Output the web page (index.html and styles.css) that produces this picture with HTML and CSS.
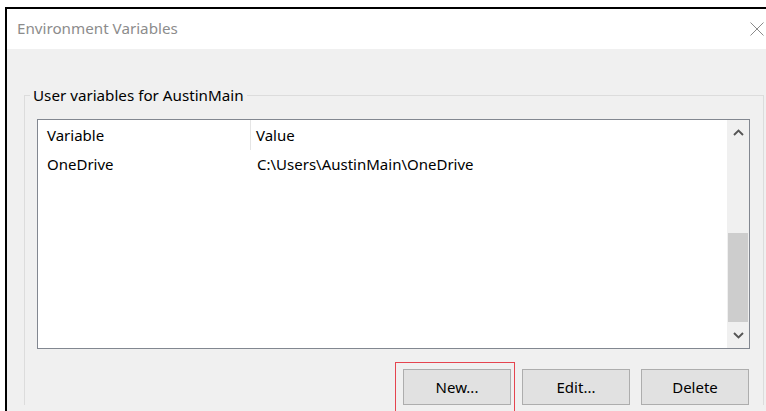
FILE: index.html
```html
<!DOCTYPE html>
<html lang="en">
<head>
<meta charset="utf-8">
<title>Environment Variables</title>
<link rel="stylesheet" href="styles.css">
</head>
<body>
<div class="window">
  <div class="titlebar">
    <span class="title">Environment Variables</span>
    <svg class="close" width="14" height="14" viewBox="0 0 14 14" aria-hidden="true">
      <path d="M0.5 0.5 L13.5 13.5 M13.5 0.5 L0.5 13.5" stroke="#8a8a8a" stroke-width="1" fill="none"/>
    </svg>
  </div>
  <div class="content">
    <fieldset class="group">
      <legend>User variables for AustinMain</legend>
      <div class="listbox">
        <div class="table">
          <div class="row header">
            <div class="cell col-name">Variable</div>
            <div class="cell col-value">Value</div>
          </div>
          <div class="row">
            <div class="cell col-name">OneDrive</div>
            <div class="cell col-value">C:\Users\AustinMain\OneDrive</div>
          </div>
        </div>
        <div class="scrollbar">
          <div class="arrow">
            <svg width="11" height="7" viewBox="0 0 11 7"><path d="M1 6 L5.5 1.5 L10 6" stroke="#555" stroke-width="1.9" fill="none"/></svg>
          </div>
          <div class="track"><div class="thumb"></div></div>
          <div class="arrow">
            <svg width="11" height="7" viewBox="0 0 11 7"><path d="M1 1 L5.5 5.5 L10 1" stroke="#555" stroke-width="1.9" fill="none"/></svg>
          </div>
        </div>
      </div>
      <div class="buttons">
        <button class="btn focused">New...</button>
        <button class="btn">Edit...</button>
        <button class="btn">Delete</button>
      </div>
    </fieldset>
  </div>
</div>
</body>
</html>
```

FILE: styles.css
```css
html, body {
  margin: 0;
  padding: 0;
  background: #ffffff;
  overflow: hidden;
}

body {
  width: 766px;
  height: 411px;
  font-family: "Noto Sans", "Open Sans", sans-serif;
  font-size: 15px;
  color: #000;
}

.window {
  margin: 7px 0 0 5px;
  border-top: 2px solid #000;
  border-left: 2px solid #000;
  height: 402px;
  display: flex;
  flex-direction: column;
}

.titlebar {
  height: 40px;
  background: #fff;
  display: flex;
  align-items: center;
  justify-content: space-between;
  padding: 0 2px 0 10px;
  flex: none;
}

.title {
  color: #8c8c8c;
  font-size: 15.2px;
  position: relative;
  top: -1px;
}

.close {
  margin-top: -1px;
}

.content {
  flex: 1;
  background: #f0f0f0;
  padding: 36px 2px 0 17px;
}

.group {
  margin: 0;
  border: 1px solid #dcdcdc;
  border-bottom: none;
  padding: 14px 13px 0 12px;
  min-width: 0;
}

.group legend {
  margin-left: -7px;
  padding: 0 3px;
  line-height: 20px;
  font-size: 15.2px;
}

.listbox {
  height: 228px;
  border: 1px solid #828790;
  background: #fff;
  display: flex;
}

.table {
  flex: 1;
}

.row {
  display: flex;
  height: 28px;
  align-items: center;
}

.row.header {
  height: 30px;
}

.cell {
  height: 100%;
  display: flex;
  align-items: center;
  white-space: nowrap;
}

.col-name {
  width: 213px;
  padding-left: 9px;
  box-sizing: border-box;
}

.col-value {
  padding-left: 6px;
}

.header .col-name {
  border-right: 1px solid #e5e5e5;
}

.header .col-value {
  padding-left: 5px;
}

.scrollbar {
  width: 22px;
  background: #f0f0f0;
  display: flex;
  flex-direction: column;
}

.arrow {
  height: 25px;
  display: flex;
  align-items: center;
  justify-content: center;
  flex: none;
}

.track {
  flex: 1;
  padding: 88px 1px 0 1px;
}

.thumb {
  height: 89px;
  background: #cdcdcd;
}

.buttons {
  display: flex;
  justify-content: flex-end;
  gap: 11px;
  margin-top: 20px;
  padding-right: 1px;
}

.btn {
  width: 108px;
  height: 36px;
  border: 1px solid #adadad;
  background: #e1e1e1;
  font-family: "Noto Sans", "Open Sans", sans-serif;
  font-size: 15px;
  color: #000;
  padding: 0;
  position: relative;
}

/* keyboard focus highlight drawn around the active button */
.btn.focused::after {
  content: "";
  position: absolute;
  left: -9px;
  top: -8px;
  right: -5px;
  bottom: -9px;
  border: 1px solid #e5444f;
  border-bottom-color: #f2a0a6;
}
```
